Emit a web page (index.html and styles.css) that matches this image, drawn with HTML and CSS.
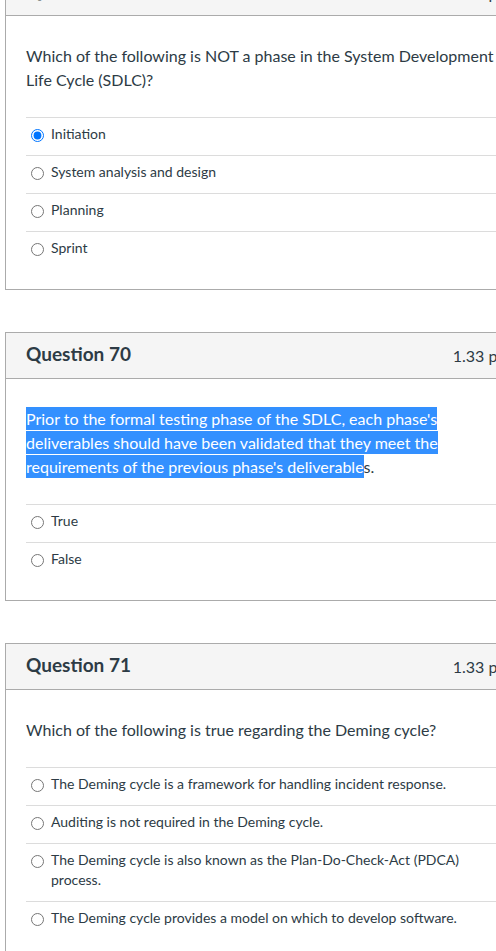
FILE: index.html
```html
<!DOCTYPE html>
<html lang="en">
<head>
<meta charset="utf-8">
<title>Quiz</title>
<link rel="stylesheet" href="styles.css">
</head>
<body>
<div class="page">
  <div class="question">
    <div class="header"><span class="title">Question 69</span><span class="points">1.33 pts</span></div>
    <p class="text">Which of the following is NOT a phase in the System Development Life Cycle (SDLC)?</p>
    <ul class="answers">
      <li class="answer"><input type="radio" name="q69" checked><span>Initiation</span></li>
      <li class="answer"><input type="radio" name="q69"><span>System analysis and design</span></li>
      <li class="answer"><input type="radio" name="q69"><span>Planning</span></li>
      <li class="answer"><input type="radio" name="q69"><span>Sprint</span></li>
    </ul>
  </div>
  <div class="question">
    <div class="header"><span class="title">Question 70</span><span class="points">1.33 pts</span></div>
    <p class="text"><span class="sel">Prior to the formal testing phase of the SDLC, each phase's deliverables should have been validated that they meet the requirements of the previous phase's deliverable</span>s.</p>
    <ul class="answers">
      <li class="answer"><input type="radio" name="q70"><span>True</span></li>
      <li class="answer"><input type="radio" name="q70"><span>False</span></li>
    </ul>
  </div>
  <div class="question">
    <div class="header"><span class="title">Question 71</span><span class="points">1.33 pts</span></div>
    <p class="text">Which of the following is true regarding the Deming cycle?</p>
    <ul class="answers">
      <li class="answer"><input type="radio" name="q71"><span>The Deming cycle is a framework for handling incident response.</span></li>
      <li class="answer"><input type="radio" name="q71"><span>Auditing is not required in the Deming cycle.</span></li>
      <li class="answer"><input type="radio" name="q71"><span>The Deming cycle is also known as the Plan-Do-Check-Act (PDCA) process.</span></li>
      <li class="answer"><input type="radio" name="q71"><span>The Deming cycle provides a model on which to develop software.</span></li>
    </ul>
  </div>
</div>
</body>
</html>
```
FILE: styles.css
```css
html, body {
  margin: 0;
  padding: 0;
  overflow: hidden;
  background: #ffffff;
}
body {
  font-family: Lato, "Liberation Sans", sans-serif;
  color: #2d3b45;
}
.page {
  margin-top: -31px;
  padding-left: 5px;
  display: flex;
  flex-direction: column;
  gap: 42px;
}
.question {
  width: 526px;
  flex: none;
  box-sizing: border-box;
  border: 1px solid #ababab;
  background: #fff;
}
.header {
  height: 45px;
  padding: 0 20px;
  background: #f5f5f5;
  border-bottom: 1px solid #ababab;
  display: flex;
  align-items: center;
  justify-content: space-between;
}
.title {
  font-size: 19px;
  font-weight: 700;
  margin-bottom: 5px;
}
.points {
  font-size: 16px;
}
.text {
  margin: 0;
  padding: 28px 20px 25px;
  font-size: 16px;
  line-height: 24px;
}
.sel {
  background: #3390ff;
  color: #ffffff;
  padding: 2.4px 0;
}
.answers {
  list-style: none;
  margin: 0 20px;
  padding: 0 0 20px;
}
.answer {
  display: flex;
  align-items: flex-start;
  border-top: 1px solid #dcdcdc;
  padding: 6px 0 11px;
  font-size: 14px;
  line-height: 20px;
}
.answer input {
  flex: none;
  width: 13px;
  height: 13px;
  margin: 5px 7px 0 5px;
}
```
